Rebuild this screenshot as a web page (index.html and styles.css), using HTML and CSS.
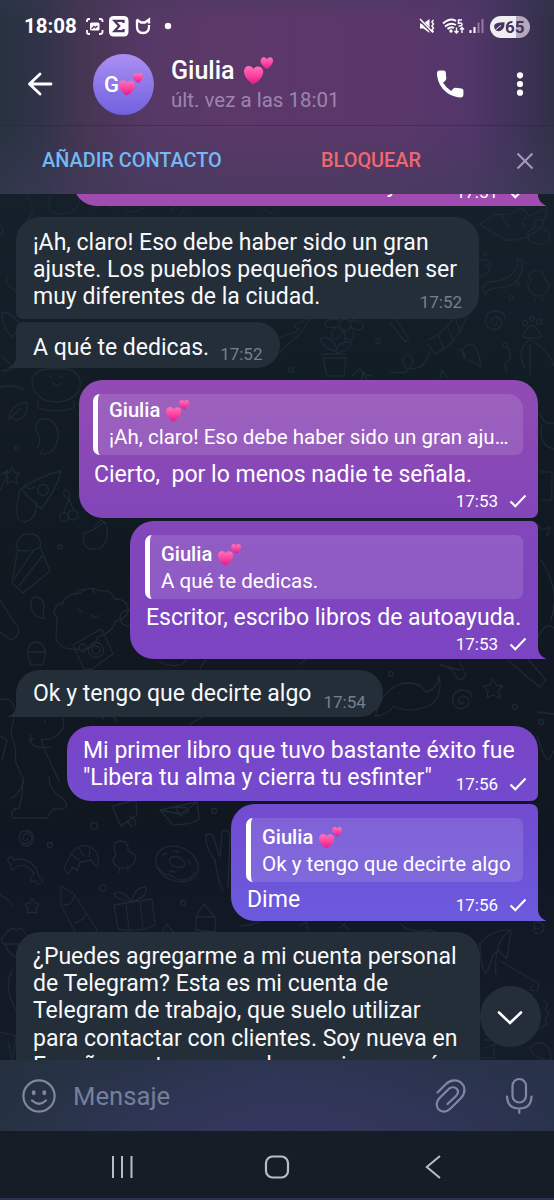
FILE: index.html
```html
<!DOCTYPE html>
<html lang="es">
<head>
<meta charset="utf-8">
<title>Giulia</title>
<link rel="stylesheet" href="styles.css">
</head>
<body>
<svg width="0" height="0" class="defs">
  <defs>
    <linearGradient id="hg" x1="0" y1="0" x2="0" y2="1"><stop offset="0" stop-color="#ff74b6"/><stop offset=".5" stop-color="#fb46a4"/><stop offset="1" stop-color="#e0188c"/></linearGradient>
    <symbol id="hearts" viewBox="0 0 28 28">
      <path fill="url(#hg)" d="M8.500 27.500C4 24 0 19.800 0 15 0 11.500 2.200 9.600 4.700 9.600c1.900 0 3.500 1 4.500 2.800 1.300-1.800 3-2.500 4.900-2.300 2.900.3 4.800 2.700 4.400 5.800C18 20.800 13.700 25 8.500 27.500z"/>
      <path fill="url(#hg)" d="M22.300 12.700c-3.400-1.800-6.100-4.300-6.300-7.400C15.900 3 17.300 1.300 19 1.200c1.400-.1 2.500.6 3.200 1.900C23 1.800 24 1.100 25.400 1.200c1.700.2 2.800 1.700 2.600 3.700-.3 3-2.700 6-5.700 7.800z"/>
    </symbol>
    <symbol id="check" viewBox="0 0 18 14"><path d="M1.500 7.500 6.300 12.300 16.500 1.500" fill="none" stroke="#fff" stroke-width="2.100"/></symbol>
    <symbol id="tail" viewBox="0 0 9 14"><path d="M0 0V14H8.300Q9.200 13.600 8 13C3 11 .8 6.500.8 0z"/></symbol>
  </defs>
</svg>
<div class="phone">
  <header class="top">
    <div class="status">
      <span class="clock">18:08</span>
      <svg class="status-left" width="90" height="24" viewBox="84 15 90 24" fill="none" stroke="#fff" stroke-width="1.800">
        <path d="M87 22v-1q0-2 2-2h1M99 19h1q2.500 0 2.500 2v1M102.500 30v2q0 2-2.500 2h-1M90 34h-1q-2 0-2-2v-2"/>
        <rect x="90" y="22.500" width="9.500" height="8" rx="1.500" fill="#fff" stroke="none"/><path d="M91.500 29l2.500-2.500 1.500 1.300 2-2" stroke="#5a3a68" stroke-width="1.300"/>
        <rect x="109" y="16" width="19.500" height="20.500" rx="4.500" fill="#fff" stroke="none"/>
        <path d="M123.500 23v-2.200h-9l4.700 5.200-4.700 5.200h9V29" stroke="#4d3560" stroke-width="2.300"/>
        <path d="M137 20v6.500q0 6.500 6 6.500t6-6.500V25M136.500 19.500l4.500 3h4l4-3v4" stroke-width="2.300"/>
        <circle cx="168" cy="26" r="3.200" fill="#fff" stroke="none"/>
      </svg>
      <svg class="status-right" width="68" height="24" viewBox="416 15 68 24" fill="none" stroke="#fff" stroke-width="1.700">
        <path d="M420 23.500h3.500l6-4.500v14l-6-4.500H420z" fill="#fff" stroke="none"/>
        <path d="M419.500 19.500 433 33" stroke="#5a3767" stroke-width="3"/><path d="M420 19l13 13.500" stroke-width="1.500"/>
        <path d="M433.500 20l-1.600 2 1.600 2-1.600 2 1.600 2-1.600 2 1.600 2" stroke-width="1.400"/>
        <path d="M443 23.500q7.500-6.500 13-2.500M445 26.500q5.500-4.800 11-1.500M447.500 29q3.500-3 6.500-1" stroke-width="2"/>
        <circle cx="451" cy="31" r="1.700" fill="#fff" stroke="none"/>
        <path d="M462 20h-3.500v3.200q3.500-.8 3.500 1.300 0 1.800-3.500 1.500" stroke-width="1.500"/>
        <path d="M456.500 27.500v5.500m-2-2 2 2 2-2M462 33v-5.500m-2 2 2-2 2 2" stroke-width="1.400"/>
        <path d="M470.500 33v-3M474.500 33v-6" stroke-width="2"/><path d="M478.500 33V22.500M482.500 33V19" stroke="#98799f" stroke-width="2"/>
      </svg>
      <div class="battery">
        <svg width="12" height="12" viewBox="0 0 12 12"><path d="M2.500 9.500Q-1 3.500 4.500 2q3-.9 7-.8.500 4.500-1.800 7Q7 11 3.500 9.800z" fill="#49365c"/><path d="M.5 11.500Q3 7.500 8 4.500" stroke="#f1eef3" stroke-width="1" fill="none"/></svg>
        <b>65</b>
      </div>
    </div>
    <div class="chatbar">
      <svg class="back" width="26" height="24" viewBox="27 72 26 24" fill="none" stroke="#fff" stroke-width="2.800" stroke-linecap="round" stroke-linejoin="round"><path d="M51 84H29.500M40 74 29.500 84 40 94"/></svg>
      <div class="avatar"><b>G</b><svg width="24" height="24"><use href="#hearts"/></svg></div>
      <div class="who">
        <div class="name"><span>Giulia</span><svg width="29" height="29"><use href="#hearts"/></svg></div>
        <div class="seen">últ. vez a las 18:01</div>
      </div>
      <svg class="call" width="28" height="28" viewBox="436 70 28 28"><path fill="#fff" d="M439.500 70.600h4.200c1.300 0 2 .8 2.100 2l.5 5.500c.1 1-.2 1.700-.8 2.300l-2.400 2.300q3 5.200 8 8.200l2.300-2.300c.6-.6 1.400-.9 2.300-.8l5.700.7c1.200.2 2 1 2 2.100v4.200c0 1.700-1 2.600-2.600 2.600-13.500-.8-23.300-11-23.800-24-.1-1.700.9-2.800 2.500-2.800z"/></svg>
      <svg class="dots" width="8" height="26" viewBox="0 0 8 26" fill="#fff"><circle cx="4" cy="4.300" r="3.100"/><circle cx="4" cy="13" r="3.100"/><circle cx="4" cy="21.700" r="3.100"/></svg>
    </div>
    <div class="actions">
      <span class="add">AÑADIR CONTACTO</span>
      <span class="block">BLOQUEAR</span>
      <svg width="18" height="18" viewBox="0 0 18 18" stroke="#a497b7" stroke-width="2.200"><path d="M1.500 1.500 16.500 16.500M16.500 1.500 1.500 16.500"/></svg>
    </div>
  </header>

  <main class="chat">
    <svg class="wallpaper" width="554" height="867" viewBox="0 193 554 867" fill="none" stroke="#1d2934" stroke-width="1.300" stroke-linecap="round" stroke-linejoin="round">
      <path d="M27 195q8 12 4 20-5 7-9 15M50 195q-5 20 12 19t19-19M95 208q10-6 19 0M125 210q15 6 23-8M170 212l8-10 7 6-6 8M260 204q6 9 12 9"/>
      <path d="M0 235q6-4 0-10M8 275q-6 8 9 17M2 312q14 2 18 15l-7 10Q2 330 2 312zM0 355q12 8 12 14l-10 2"/>
      <path d="M480 225q14-14 28-10l14-7 8 8 18-9-6 20q-18 16-36 13-14-8-26-15zM500 213l10 16M528 232q10-10 20 0 6 10-8 12-14 0-12-12zM524 228q-4-9 3-10M534 226q0-8 8-6"/>
      <path d="M484 266q6-3 5 4t-9 6q-8-3-4-12 8-9 16 1M482 290q2-9 14-9 20-2 22-22l4 1q2 28-26 28-8 0-10 6zM531 282q-5-9 3-11 8-3 10 5 1 5 5 8-1 12-12 12-10-3-9-12zM535 297v4M542 297v4"/>
      <path d="M497 323q-3 4-5 0t4-6q8 2 5 9-9 8-15-2-2-11 8-13 11 0 11 8M527 329q5-7 10 0 8 9-1 9h-9q-7 0 0-9z"/><circle cx="525" cy="323" r="2.500"/><circle cx="532" cy="319" r="2.500"/><circle cx="539" cy="322" r="2.500"/>
      <circle cx="345" cy="325" r="6"/><path d="M339 320q-9-8-2-11 6 0 8 8 4-10 10-6 4 5-4 10 13-1 12 6-3 6-12 0 6 10 0 13-6 1-7-11-5 12-11 9-4-6 4-11-13 2-12-4 4-6 14-3M336 347q-4-12-16-8 3 10 16 12 3-12 16-8-1 7-15 10M321 354h24M323 358l4 18h17l2-18zM345 331q2 8-3 14"/>
      <path d="M390 322l15 20 4-3-13-19M428 340q12-4 26-22M428 344l7 10q22-10 32-38M438 335l6 14M448 329l6 12M456 321l5 11M430 352q-6 20-24 16-8-10 2-14 10 6-2 18-10 2-16-1M472 362q-10-2-10-12 10-12 16 2 1 4 3 15-6-5-9-5zM458 350q7 0 7 8M525 368q-10-20 5-28 19 10 24 26M530 345v30M507 372q-5-8 2-12 3-8-1-12M440 378l2-8 5 7"/>
      <circle cx="485" cy="254" r="1.800"/><circle cx="511" cy="298" r="2.300"/><circle cx="518" cy="284" r="1.800"/><circle cx="378" cy="341" r="2.300"/><circle cx="291" cy="370" r="2.300"/><circle cx="505" cy="345" r="2.300"/>
      <path d="M277 338l22-7-5-6 16-7-8 14-8 7-14 13M352 376l8-7 6 6 5 1M361 381l2-8 4 8"/>
      <path d="M0 387q14-3 24 3M32 381q2-12 18-12h18q14 4 12 18-4 13-22 15-24 0-26-21zM38 402v6q18 6 36 0v-7M48 376l4 2M63 376l-4 2M53 383l4 3 4-3M9 417q2-12 18-15 2 15-10 18zM8 420l13-12M37 448q6-6-1-18-1-12 10-11 12 2 12 18-2 18-18 17l3-5M12 467l3 6 5 0-4 4 1 7-5-3-5 3 1-7-4-4 6-1z"/>
      <path d="M21 489q20-14 40-18-4 18-20 38zM25 484q2 8 10 3M20 490q-8 32 4 32 14-3 12-20"/><circle cx="43" cy="490" r="5.500"/>
      <circle cx="64" cy="517" r="4.500"/><circle cx="73" cy="515" r="5"/><path d="M64 511l5-12 4 10M68 499q-7-4-3-10 7 3 3 10zM84 533q12-3 20-11 8 12-2 25-14 6-18-4-1-5 0-10zM95 526l6-6 5 3M0 475l8-5-2 8-6 12"/>
      <path d="M16 547q3-14 14-13 12 0 10 13l10 24-27 22-11-10 6-36M17 550q14 3 23-3M14 579l20-29M19 586l23-30"/>
      <path d="M60 603q-10 8-3 14l-1 20q2 13 20 12 16 4 22-12 14-4 18-16 10-2 12-10 1-12-14-12-2-10-14-8-10-6-20 2-16 1-18 12z"/>
      <path d="M75 595q4-8 10-5M92 589l3 4M78 609l4 3M91 615q5 5 8 0M31 605q-1-9 7-8 9 5 5 14l1 7q-12 0-13-13zM0 600l18 28q3 8-7 12L0 632M28 655q-1-12 8-13 11 2 9 15-1 6-3 8H31zM28 652h17M73 645l26-15q4 0 5 4l9 20-21 15q-8 2-9-2z"/><circle cx="83" cy="648" r="4"/><circle cx="96" cy="650" r="7.500"/><circle cx="96" cy="650" r="4"/>
      <circle cx="17" cy="448" r="2"/><circle cx="60" cy="547" r="2.200"/><circle cx="128" cy="618" r="8"/>
      <path d="M540 415l6 8h8M542 425q-4 20 12 24M541 472h11v28h-10M538 525l4 5 8-3-3 9M541 560q20 30 10 60M537 640q8-20 17-12M160 662q20 8 26-2M300 664l8-6M440 665l20 5M200 668l6-8M0 700q12-4 14 8"/>
      <path d="M14 717l-3 16 4 14 1 16 7 15-1 18-3 12q-10 1-6 10h34l6-9q22 2 8-12-12-7-12-20M63 718q4 15-14 21l-8 1 6 15 12 26M31 735q-2 11 7 12t12 0M34 739l-5 2"/>
      <path d="M45 721v2M96 717l7-1M102 719q8-8 15 2M190 724l14-8M0 736l7 4-5 20M10 799q10-4 14-19"/>
      <path d="M376 714q5-22 24-30 19-4 26 8 12-3 13-16 4 19-7 28-21 11-38 2-6 9-19 10zM398 693h1M493 679l3 6 7 1-5 5 2 7-7-3-6 3 1-7-5-5 7-1zM464 702q-3 4-5 0t4-6q8 2 5 9-9 8-15-2-2-11 8-13 11 0 11 8M508 660q15 14 32 27l6-7-19-22M538 712l16 2M537 736q8 25 12 24l5-9M440 664l13 7 5 8q5 2 8-4l-6-12"/>
      <circle cx="391" cy="674" r="2.300"/><circle cx="515" cy="707" r="2.500"/><circle cx="541" cy="722" r="2.500"/>
      <path d="M112 806l24-6 1 15-16 11zM127 821l4 5q7 0 4-6l-6-4M160 810l37-8 2 16q-2 6-26 7zM160 810l20 4 15-10M180 816l-4-8q5-2 7 0 5-2 5 4z"/>
      <circle cx="94" cy="826" r="3.300"/><circle cx="50" cy="845" r="2.500"/><circle cx="214" cy="811" r="2.500"/><circle cx="103" cy="888" r="3.300"/><circle cx="183" cy="903" r="2.500"/>
      <path d="M28 839q-3 3-5 0t4-6q7 2 4 8-8 6-12-2 0-9 8-8 8 1 6 10-4 8-12 3M98 866q2-16-10-20-12-2-18 10l-6 12 4 6 5-7 4 4 3-9 11-2 5 6zM72 855l7 5M79 848l5 8M90 848l-1 9M116 855q-5-12 4-14 9 0 8 10 10 3 7 10-4 8-16 7-10-6-3-13zM119 868v5M128 868v5M11 865q-6-6-1-8 4 0 4 3 12-4 22 8l3 9q6 3 2 6-5 3-6-3-5 4-4-2l3-5q-9-12-20-5-3 5-3-3z"/>
      <ellipse cx="177" cy="864" rx="22" ry="17" transform="rotate(24 177 864)"/><ellipse cx="177" cy="862" rx="8" ry="5" transform="rotate(20 177 862)"/><path d="M158 868q7 8 12 7l7 4q11 4 18-7M163 855l4-2M188 860l2 4M173 851l5 1M170 871l5 1"/>
      <path d="M61 886l13 8 23 36q-3 12-15 15L61 905zM64 905q9 0 10-10M75 923q8-2 11-9M32 898l3 5 4 1-3 4 1 5-5-1-5 1 1-5-3-4 5-1zM114 905l38-6 3 26q-17 8-37 4zM126 904l3 25M140 901l3 26M132 902q-15-2-18-8 8-6 18 8 2-14 13-15 5 8-13 15M0 895q12 6 12 11"/>
      <path d="M215 860q-10-12-9-25 6-5 10 10l4 12 2-25q7-5 8 5l-2 50M223 890q-5-8-8-30M196 930v-14l8-12 12 14-1 14zM196 917h19M162 932l5-8 6 8M5 935q4-9 12-5 6-4 8 4 6 2 3 10H4q-6-3 1-9M5 944q5 14 16 13M240 926q10 0 25-6M12 970q-9 17 4 40M0 1032l16 4-3 23M8 1042l4 16M10 975h2"/>
      <path d="M479 944q15-16 32-14l-4 29-9-9-5 5q-3 13-8 19-5-11-5-30M510 930q-17 12-14 46M500 961l38 22q2 10-8 7l3-5M540 928q-5 3-6-2t5-4q7 3 4 9-7 5-10 0M543 1000l5 4-3 5 4 5-4 5 2 5-7 4M484 1040h10v18h-13M484 1048l12-4M530 1048q7-10 18-1 8 18-5 12-12-3-13-11zM401 924q10 10 30 6l10 5M300 926l6-4 2 8M340 928l4-4 4 5"/>
    </svg>

    <div class="thread">
      <div class="msg out cut">
        <div class="text">muy</div>
        <div class="meta">17:51<svg width="18" height="14"><use href="#check"/></svg></div>
        <svg class="tail" width="9" height="14"><use href="#tail"/></svg>
      </div>
      <div class="msg in first">
        <div class="text">¡Ah, claro! Eso debe haber sido un gran<br>ajuste. Los pueblos pequeños pueden ser<br>muy diferentes de la ciudad.</div>
        <div class="meta">17:52</div>
      </div>
      <div class="msg in job last">
        <div class="text">A qué te dedicas.</div>
        <div class="meta">17:52</div>
        <svg class="tail" width="9" height="14"><use href="#tail"/></svg>
      </div>
      <div class="msg out town">
        <div class="reply"><div class="author"><span>Giulia</span><svg width="23" height="23"><use href="#hearts"/></svg></div><div class="quote">¡Ah, claro! Eso debe haber sido un gran aju…</div></div>
        <div class="text">Cierto,&nbsp; por lo menos nadie te señala.</div>
        <div class="meta">17:53<svg width="18" height="14"><use href="#check"/></svg></div>
      </div>
      <div class="msg out writer">
        <div class="reply"><div class="author"><span>Giulia</span><svg width="23" height="23"><use href="#hearts"/></svg></div><div class="quote">A qué te dedicas.</div></div>
        <div class="text">Escritor, escribo libros de autoayuda.</div>
        <div class="meta">17:53<svg width="18" height="14"><use href="#check"/></svg></div>
        <svg class="tail" width="9" height="14"><use href="#tail"/></svg>
      </div>
      <div class="msg in ok last">
        <div class="text">Ok y tengo que decirte algo</div>
        <div class="meta">17:54</div>
        <svg class="tail" width="9" height="14"><use href="#tail"/></svg>
      </div>
      <div class="msg out book">
        <div class="text">Mi primer libro que tuvo bastante éxito fue<br>"Libera tu alma y cierra tu esfinter"</div>
        <div class="meta">17:56<svg width="18" height="14"><use href="#check"/></svg></div>
      </div>
      <div class="msg out tell">
        <div class="reply"><div class="author"><span>Giulia</span><svg width="23" height="23"><use href="#hearts"/></svg></div><div class="quote">Ok y tengo que decirte algo</div></div>
        <div class="text">Dime</div>
        <div class="meta">17:56<svg width="18" height="14"><use href="#check"/></svg></div>
        <svg class="tail" width="9" height="14"><use href="#tail"/></svg>
      </div>
      <div class="msg in work">
        <div class="text">¿Puedes agregarme a mi cuenta personal<br>de Telegram? Esta es mi cuenta de<br>Telegram de trabajo, que suelo utilizar<br>para contactar con clientes. Soy nueva en<br>España y estoy muy sola en mi mes acá</div>
      </div>
    </div>
    <div class="fab"><svg width="26" height="16" viewBox="0 0 26 16" fill="none" stroke="#fff" stroke-width="2.600" stroke-linecap="round"><path d="M2 2.500 13 13 24 2.500"/></svg></div>
  </main>

  <footer class="composer">
    <svg width="34" height="34" viewBox="0 0 34 34" fill="none" stroke="#8088a0" stroke-width="2.200" stroke-linecap="round"><circle cx="17" cy="17" r="15.600"/><path d="M10 21.500q7 6.500 14 0"/><ellipse cx="11.700" cy="13.800" rx="1.200" ry="1.700" fill="#8088a0" stroke-width="1.500"/><ellipse cx="22.300" cy="13.800" rx="1.200" ry="1.700" fill="#8088a0" stroke-width="1.500"/></svg>
    <span class="placeholder">Mensaje</span>
    <svg class="clip" width="32" height="36" viewBox="435 1078 32 36" fill="none" stroke="#8285a4" stroke-width="2.200" stroke-linecap="round"><path d="M437.500 1092.500 446 1084C451 1079 458 1079.500 461.500 1083S466 1092.500 461 1098L450.500 1108.500C446.500 1112.500 441.500 1112.500 438.700 1109.500S436 1101.500 439.500 1098L449 1088.700C451.500 1086.500 455 1087 456.700 1088.800S458.300 1093.500 456 1096L447.500 1104"/></svg>
    <svg class="mic" width="28" height="38" viewBox="505 1077 28 38" fill="none" stroke="#8285a4" stroke-width="2.200" stroke-linecap="round"><rect x="512.500" y="1079" width="13.500" height="23.500" rx="6.700"/><path d="M507 1096.500Q507.500 1108.500 519.300 1108.500T531.500 1096.500M519.300 1108.500V1113"/></svg>
  </footer>
  <nav class="nav">
    <svg width="24" height="24" viewBox="0 0 24 24" stroke="#b9bec5" stroke-width="2"><path d="M3 1v22M12 1v22M21.500 1v22"/></svg>
    <svg class="home" width="26" height="24" viewBox="0 0 26 24" fill="none" stroke="#b9bec5" stroke-width="2.200"><rect x="2" y="1.500" width="22" height="21" rx="6.500"/></svg>
    <svg class="prev" width="16" height="24" viewBox="0 0 16 24" fill="none" stroke="#b9bec5" stroke-width="2"><path d="M15 1 1.800 12 15 23"/></svg>
  </nav>
</div>
</body>
</html>
```
FILE: styles.css
```css
* { box-sizing: border-box; }
body { margin: 0; background: #151d26; font-family: Roboto, "Liberation Sans", sans-serif; color: #fff; }
svg { display: block; flex: none; }
.defs { position: absolute; }
.phone { width: 554px; height: 1200px; display: flex; flex-direction: column; overflow: hidden; white-space: nowrap; }

.top {
  height: 194px; flex: none;
  background:
    linear-gradient(180deg, rgba(57,57,86,.25) 0, rgba(57,57,86,0) 20px, rgba(57,57,86,0) 120px, rgba(60,60,88,.5) 194px),
    linear-gradient(90deg, #27323f 0, #303349 40px, #473553 85px, #563866 145px, #5c3869 240px, #5a376b 400px, #52366a 470px, #40335a 515px, #302f47 554px);
}
.status { height: 50px; display: flex; align-items: center; padding: 3px 24px 0; }
.clock { font-size: 20.500px; font-weight: 700; width: 60px; margin-top: -1px; }
.status-right { margin-left: 242px; }
.battery {
  margin-left: 6px; width: 40px; height: 22px; border-radius: 11px; display: flex; align-items: center; padding-left: 3px; gap: 0;
  background: linear-gradient(90deg, #f1eef3 0 26px, #b4a8bd 26px); color: #42345a; font-size: 17px;
}
.chatbar { height: 75px; display: flex; align-items: center; padding: 0 30px 7px 27px; }
.avatar {
  width: 61px; height: 61px; margin-left: 40px; border-radius: 50%; display: flex; align-items: center; padding-left: 11px;
  background: linear-gradient(#ab8ff2, #7161e0); font-size: 22px;
}
.avatar b { font-weight: 500; }
.who { margin-left: 17px; width: 265px; }
.name { display: flex; align-items: center; gap: 9px; height: 31px; font-size: 25px; font-weight: 500; }
.seen { font-size: 20.500px; line-height: 28px; color: #9b86af; }
.dots { margin-left: 52px; }
.actions {
  height: 69px; display: flex; align-items: center; padding: 1px 20px 0 42px; font-size: 19.900px; font-weight: 500;
  border-top: 1px solid rgba(38,30,52,.35);
}
.add { width: 279px; color: #73b9f5; }
.block { width: 195px; color: #ee686f; }

.chat { height: 866px; flex: none; position: relative; overflow: hidden; background: linear-gradient(#15202a, #101820 45%, #111722 75%, #141c29); }
.wallpaper { position: absolute; left: 0; top: -1px; }
.thread { position: relative; display: flex; flex-direction: column; align-items: flex-start; padding: 0 16px; margin-top: -50px; }
.msg { position: relative; display: flex; flex-direction: column; font-size: 23.030px; line-height: 27.200px; padding: 11px 17px 0; flex: none; }
.in { background: #232e39; border-radius: 24px; color: #f8f9fb; }
.out { align-self: flex-end; border-radius: 24px; }
.meta { align-self: flex-end; display: flex; align-items: center; gap: 11px; font-size: 17px; line-height: 20px; height: 20px; color: #fff; }
.in .meta { color: #75808c; }
.tail { position: absolute; bottom: 0; right: -8px; }
.in .tail { right: auto; left: -8px; transform: scaleX(-1); fill: #232e39; }
.out .meta { margin-right: -6px; }

.cut { width: 465px; height: 62px; background: #a04bb0; border-bottom-right-radius: 0; padding: 0 17px 8px; flex-direction: row; justify-content: flex-end; align-items: flex-end; }
.cut .text { margin-right: 58px; }
.cut .meta { align-self: flex-end; margin-bottom: -4px; }
.cut .tail { fill: #a04bb0; }
.first { margin-top: 11px; width: 463px; height: 102px; padding-top: 12px; border-bottom-left-radius: 7px; }
.first .meta { margin-top: -19px; }
.last { flex-direction: row; border-top-left-radius: 7px; border-bottom-left-radius: 0; }
.last .meta { align-self: flex-start; margin-top: 10px; margin-left: 11px; }
.job { margin-top: 3px; width: 264px; height: 46px; padding-top: 12px; }
.town { margin-top: 12px; width: 459px; height: 138px; padding: 14px 15px 0 14px; background: linear-gradient(#924bb3, #8246b9); border-bottom-right-radius: 7px; }
.writer { margin-top: 3px; width: 408px; height: 138px; padding: 14px 15px 0; background: linear-gradient(#8347ba, #7b44c3); border-radius: 24px 7px 0 24px; }
.writer .tail { fill: #7b44c3; }
.ok { margin-top: 11px; width: 367px; height: 47px; padding-top: 10px; border-top-left-radius: 24px; }
.ok .meta { margin-top: 12px; margin-left: 12px; }
.book { margin-top: 9px; width: 471px; height: 75px; padding-left: 16px; background: linear-gradient(#7a44c7, #734bce); border-bottom-right-radius: 7px; }
.book .meta { margin-top: -17px; }
.tell { margin-top: 3px; width: 307px; height: 117px; padding: 14px 15px 0; background: linear-gradient(#724bd0, #6b5ade); border-radius: 24px 7px 0 24px; }
.tell .tail { fill: #6b5ade; }
.work { margin-top: 11px; width: 464px; height: 170px; border-radius: 24px 24px 0 0; }

.reply { height: 64px; border-radius: 7px; border-left: 5px solid #fff; background: rgba(255,255,255,.12); padding: 6px 0 0 11px; }
.town .reply { height: 61px; border-top-right-radius: 15px; padding-top: 3px; }
.author { display: flex; align-items: center; gap: 6px; height: 27px; font-size: 20.200px; font-weight: 500; }
.quote { font-size: 20.550px; line-height: 27px; }
.reply + .text { margin-top: 5px; padding-left: 1px; }
.reply ~ .meta { margin-right: -4px; }
.town .reply + .text { margin-top: 6px; }
.town .meta { margin-top: 3px; }
.writer .meta { margin-top: 3px; }
.tell .reply + .text { margin-top: 4px; }
.tell .meta { margin-top: -18px; }

.fab { position: absolute; left: 480px; top: 792px; width: 61px; height: 61px; border-radius: 50%; background: #232e3a; display: flex; align-items: center; justify-content: center; padding-top: 2px; }
.fab svg { margin-right: 1px; }

.composer {
  height: 71px; flex: none; display: flex; align-items: center; padding: 0 20px 0 22px;
  background: radial-gradient(ellipse 300px 80px at 290px 75px, #35375f, rgba(53,55,95,0)), linear-gradient(90deg, #253140, #2c3552 50%, #283249);
}
.placeholder { margin-left: 17px; font-size: 25.700px; width: 362px; color: #74809a; }
.mic { margin-left: 38px; }
.nav { height: 69px; flex: none; display: flex; align-items: center; background: #161d26; padding: 4px 0 0 110px; border-bottom: 2px solid #29334b; }
.home { margin-left: 130px; }
.prev { margin-left: 135px; }
```
